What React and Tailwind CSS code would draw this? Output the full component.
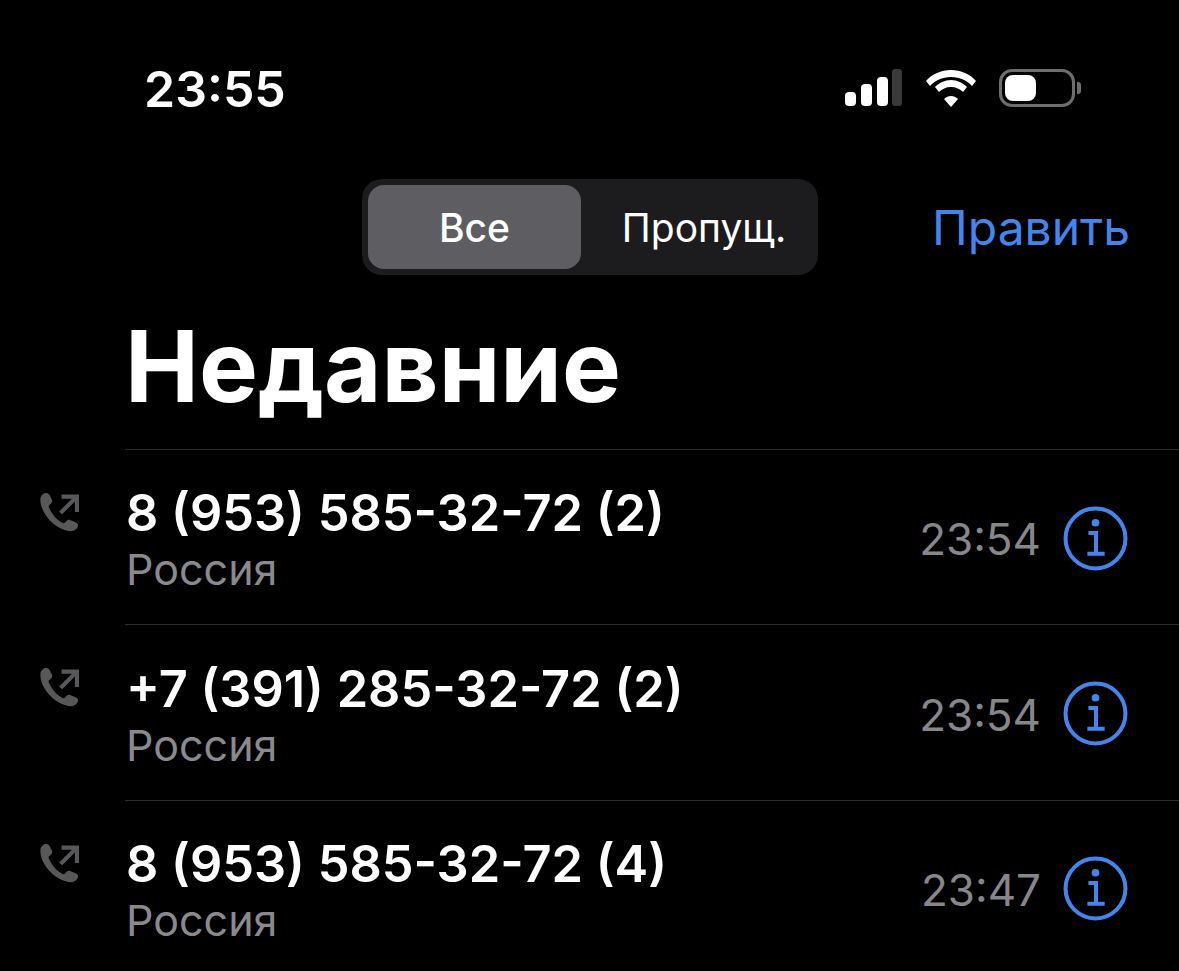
import React from 'react';

const calls = [
  { number: '8 (953) 585-32-72 (2)', time: '23:54' },
  { number: '+7 (391) 285-32-72 (2)', time: '23:54' },
  { number: '8 (953) 585-32-72 (4)', time: '23:47' },
];

const OutgoingIcon = () => (
  <svg viewBox="0 0 40 40" className="w-[41px] h-[41px]" fill="none">
    <path d="M1.500 5.500C2 3.500 4 1.300 6.500 1C8.500 .8 10 1.800 10.800 3.800L12.600 7.300C13.300 9 13 10.200 11.600 11.400L10 12.700C9.300 13.300 9.200 14.100 9.600 15C11 18.300 13.500 22.200 16.200 25C18.500 27.300 20.800 29 23.200 30.200C24 30.600 24.800 30.400 25.400 29.800L26.900 28.200C28 27.100 29.300 26.900 30.800 27.500L35 29.200C37.500 30.100 38.500 31.600 38 33.500C37 36.500 33.900 38.600 30.200 38.300C23.600 37.700 16 33.500 10.500 27.600C5 21.700 .3 12.600 1.500 5.500Z" fill="#58585a" />
    <path d="M24 4.500H37V17.500M36 5.500L22.500 19" stroke="#58585a" strokeWidth="4" strokeLinecap="square" />
  </svg>
);

const InfoIcon = () => (
  <svg viewBox="0 0 64 64" className="w-[65px] h-[65px] mt-[2px]" fill="none">
    <circle cx="32" cy="32" r="29.500" stroke="#4285ec" strokeWidth="4" />
    <circle cx="32" cy="16.500" r="3.800" fill="#4285ec" />
    <path d="M25 26.500H32.500V47M24 47H41" stroke="#4285ec" strokeWidth="4" />
  </svg>
);

const CallRow = ({ number, time }) => (
  <div className="flex items-center h-[175.4px]">
    <div className="w-[125px] shrink-0 pl-[39px] self-start pt-[43px]">
      <OutgoingIcon />
    </div>
    <div className="flex-1 h-full border-t border-[#2c2c2e] flex items-center pr-[51px] pl-[1px]">
      <div className="flex-1 mt-[8px]">
        <div className="text-[50.5px] leading-[56px] font-semibold text-white">{number}</div>
        <div className="text-[43px] leading-[56px] text-[#8a8a8e]">Россия</div>
      </div>
      <div className="text-[44px] leading-[60px] text-[#87878b] mr-[22px] mt-[4px]">{time}</div>
      <InfoIcon />
    </div>
  </div>
);

export default function App() {
  return (
    <div className="w-[1179px] h-[971px] overflow-hidden bg-black font-['Inter',sans-serif] text-white">
      <div className="flex items-center justify-between h-[179px] pl-[144px] pr-[98px] pb-[4px]">
        <div className="text-[50px] font-semibold mt-[4px]">23:55</div>
        <div className="flex items-center gap-[22px]">
          <svg viewBox="0 0 58 37" className="w-[58px] h-[37px]">
            <rect x="0" y="23" width="11" height="14" rx="4" fill="#fff" />
            <rect x="16" y="15" width="11" height="22" rx="4" fill="#fff" />
            <rect x="32" y="8" width="11" height="29" rx="4" fill="#fff" />
            <rect x="47" y="0" width="10" height="37" rx="3" fill="#3a3a3c" />
          </svg>
          <svg viewBox="0 0 52 38" className="w-[52px] h-[38px]">
            <path d="M26 8C35 8 42 11.500 47 17L51 12C45 5 36 1 26 1C16 1 7 5 1 12L5 17C10 11.500 17 8 26 8Z" fill="#fff" />
            <path d="M26 18C31 18 35 20 38 23L42 18C38 14 32 11 26 11C20 11 14 14 10 18L14 23C17 20 21 18 26 18Z" fill="#fff" />
            <path d="M26 27C23.500 27 21 28 19 30L26 38L33 30C31 28 28.500 27 26 27Z" fill="#fff" />
          </svg>
          <div className="flex items-center gap-[2px]">
            <div className="w-[76px] h-[38px] rounded-[13px] border-[3px] border-[#6e6e70] p-[3px]">
              <div className="w-[31px] h-full rounded-[8px] bg-white" />
            </div>
            <div className="w-[4px] h-[12px] rounded-r-[3px] bg-[#6e6e70]" />
          </div>
        </div>
      </div>

      <div className="flex items-center pl-[362px] pr-[49px] h-[96px]">
        <div className="flex w-[456px] h-[96px] p-[6px] rounded-[20px] bg-[#1c1c1e] text-[39px]">
          <div className="w-[213px] rounded-[16px] bg-[#5e5e62] flex items-center justify-center font-medium pt-[2px]">Все</div>
          <div className="flex-1 flex items-center justify-center pl-[15px] pt-[2px]">Пропущ.</div>
        </div>
        <div className="ml-auto text-[48px] text-[#4285ec] pt-[2px]">Править</div>
      </div>

      <h1 className="pl-[125px] pt-[36px] h-[174px] text-[99px] leading-[110px] font-bold">Недавние</h1>

      {calls.map((call, i) => (
        <CallRow key={i} number={call.number} time={call.time} />
      ))}
    </div>
  );
}
